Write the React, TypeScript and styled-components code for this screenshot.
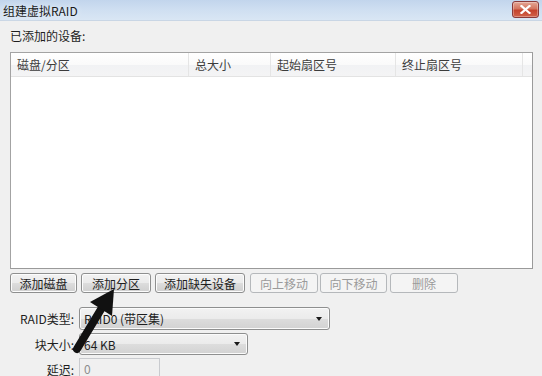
import styled, { createGlobalStyle } from 'styled-components'

const GlobalStyle = createGlobalStyle`
  html, body {
    margin: 0;
    padding: 0;
    background: #f0f0f0;
    font-family: "Noto Sans CJK SC", "Liberation Sans", sans-serif;
    font-size: 12px;
    color: #1e1e1e;
  }
`

const columns = [
  { title: '磁盘/分区', width: 178 },
  { title: '总大小', width: 82 },
  { title: '起始扇区号', width: 125 },
  { title: '终止扇区号', width: 127 },
  { title: '', width: 11 },
]

const buttons = [
  { label: '添加磁盘', width: 67, gap: 0, disabled: false },
  { label: '添加分区', width: 70, gap: 4, disabled: false },
  { label: '添加缺失设备', width: 90, gap: 4, disabled: false },
  { label: '向上移动', width: 68, gap: 5, disabled: true },
  { label: '向下移动', width: 67, gap: 2, disabled: true },
  { label: '删除', width: 68, gap: 3, disabled: true },
]

const App = () => {
  return (
    <Window>
      <GlobalStyle />
      <TitleBar>
        <Title>组建虚拟RAID</Title>
        <CloseButton>
          <svg width='11' height='9' viewBox='0 0 11 9'>
            <path d='M1.5 1 L9.5 8 M9.5 1 L1.5 8' stroke='#fff' strokeWidth='2.2' strokeLinecap='square' />
          </svg>
        </CloseButton>
      </TitleBar>
      <Body>
        <SectionLabel>已添加的设备:</SectionLabel>
        <Table>
          <HeaderRow>
            {columns.map((c, i) => (
              <HeaderCell key={i} $width={c.width}>
                {c.title}
              </HeaderCell>
            ))}
          </HeaderRow>
          <TableBody />
        </Table>
        <ButtonRow>
          {buttons.map((b) => (
            <Button key={b.label} $width={b.width} $gap={b.gap} disabled={b.disabled}>
              {b.label}
            </Button>
          ))}
        </ButtonRow>
        <Form>
          <FieldLabel>RAID类型:</FieldLabel>
          <Combo $width={251} $height={23}>
            <span>RAID0 (带区集)</span>
            <Caret />
          </Combo>
          <FieldLabel>块大小:</FieldLabel>
          <Combo $width={169} $height={22}>
            <span>64 KB</span>
            <Caret />
          </Combo>
          <FieldLabel>延迟:</FieldLabel>
          <TextBox>0</TextBox>
        </Form>
      </Body>
      <Pointer width='70' height='80' viewBox='0 0 70 80'>
        <path d='M17 69 L43 26' stroke='#111' strokeWidth='8' strokeLinecap='round' />
        <polygon points='54,9 30,22 52,36' fill='#111' />
      </Pointer>
    </Window>
  )
}
export default App

const Window = styled.div`
  position: relative;
  width: 542px;
  height: 376px;
  overflow: hidden;
  background: #f0f0f0;
`

const TitleBar = styled.div`
  height: 20px;
  display: flex;
  align-items: center;
  justify-content: space-between;
  padding: 0 3px 0 3px;
  background: linear-gradient(to bottom, #c2d5ec 0%, #cfdff1 50%, #d9e6f4 100%);
  border-bottom: 1px solid #c9d6e5;
`

const Title = styled.div`
  font-size: 12px;
  color: #1a1a1a;
  text-shadow: 0 0 6px #eef4fb;
`

const CloseButton = styled.div`
  width: 27px;
  height: 17px;
  margin-top: -2px;
  box-sizing: border-box;
  border: 1px solid #8a3a3a;
  border-radius: 3px;
  display: flex;
  align-items: center;
  justify-content: center;
  background: linear-gradient(to bottom, #e4a796 0%, #d4755f 45%, #c4422c 55%, #d1624a 100%);
  box-shadow: inset 0 0 0 1px rgba(255, 255, 255, 0.3);
`

const Body = styled.div`
  padding: 6px 9px 0 10px;
  display: flex;
  flex-direction: column;
`

const SectionLabel = styled.div`
  height: 17px;
  line-height: 17px;
  margin-bottom: 8px;
`

const Table = styled.div`
  width: 523px;
  height: 217px;
  box-sizing: border-box;
  border: 1px solid #a3a3a3;
  border-right-color: #9a9a9a;
  border-bottom-color: #9a9a9a;
  background: #fff;
  display: flex;
  flex-direction: column;
`

const HeaderRow = styled.div`
  display: flex;
  height: 23px;
  border-bottom: 1px solid #e3e3e3;
  background: linear-gradient(to bottom, #ffffff 0%, #fafafa 50%, #f1f2f4 51%, #f4f4f5 100%);
`

const HeaderCell = styled.div<{ $width: number }>`
  width: ${(p) => p.$width}px;
  flex: none;
  box-sizing: border-box;
  padding-left: 6px;
  line-height: 23px;
  color: #3c3c3c;
  border-right: 1px solid #e5e5e5;
  &:last-child {
    border-right: none;
  }
`

const TableBody = styled.div`
  flex: 1;
`

const ButtonRow = styled.div`
  display: flex;
  margin-top: 4px;
`

const Button = styled.button<{ $width: number; $gap: number }>`
  width: ${(p) => p.$width}px;
  height: 20px;
  margin-left: ${(p) => p.$gap}px;
  padding: 0;
  font-family: inherit;
  font-size: 12px;
  color: #1e1e1e;
  border: 1px solid #8e8f8f;
  border-radius: 3px;
  background: linear-gradient(to bottom, #f2f2f2 0%, #ebebeb 50%, #dddddd 51%, #cfcfcf 100%);
  box-shadow: inset 0 0 0 1px #fcfcfc;
  &:disabled {
    color: #9a9a9a;
    border-color: #b5b8bb;
    background: #f4f4f4;
    box-shadow: none;
  }
`

const Form = styled.div`
  display: grid;
  grid-template-columns: 64px auto;
  column-gap: 5px;
  row-gap: 3px;
  margin-top: 14px;
  justify-items: start;
  align-items: center;
`

const FieldLabel = styled.div`
  justify-self: end;
  color: #1e1e1e;
`

const Combo = styled.div<{ $width: number; $height: number }>`
  width: ${(p) => p.$width}px;
  height: ${(p) => p.$height}px;
  box-sizing: border-box;
  display: flex;
  align-items: center;
  justify-content: space-between;
  padding: 0 7px 0 4px;
  border: 1px solid #8e8f8f;
  border-radius: 3px;
  background: linear-gradient(to bottom, #f2f2f2 0%, #ebebeb 50%, #dddddd 51%, #d2d2d2 100%);
  box-shadow: inset 0 0 0 1px #fbfbfb;
  color: #1e1e1e;
`

const Caret = styled.div`
  width: 0;
  height: 0;
  border-left: 3.5px solid transparent;
  border-right: 3.5px solid transparent;
  border-top: 4px solid #1a1a1a;
`

const TextBox = styled.div`
  width: 81px;
  height: 22px;
  box-sizing: border-box;
  padding-left: 4px;
  line-height: 20px;
  border: 1px solid #c9cbcf;
  background: #f0f0f0;
  color: #8d8d8d;
`

const Pointer = styled.svg`
  position: absolute;
  left: 60px;
  top: 280px;
`
